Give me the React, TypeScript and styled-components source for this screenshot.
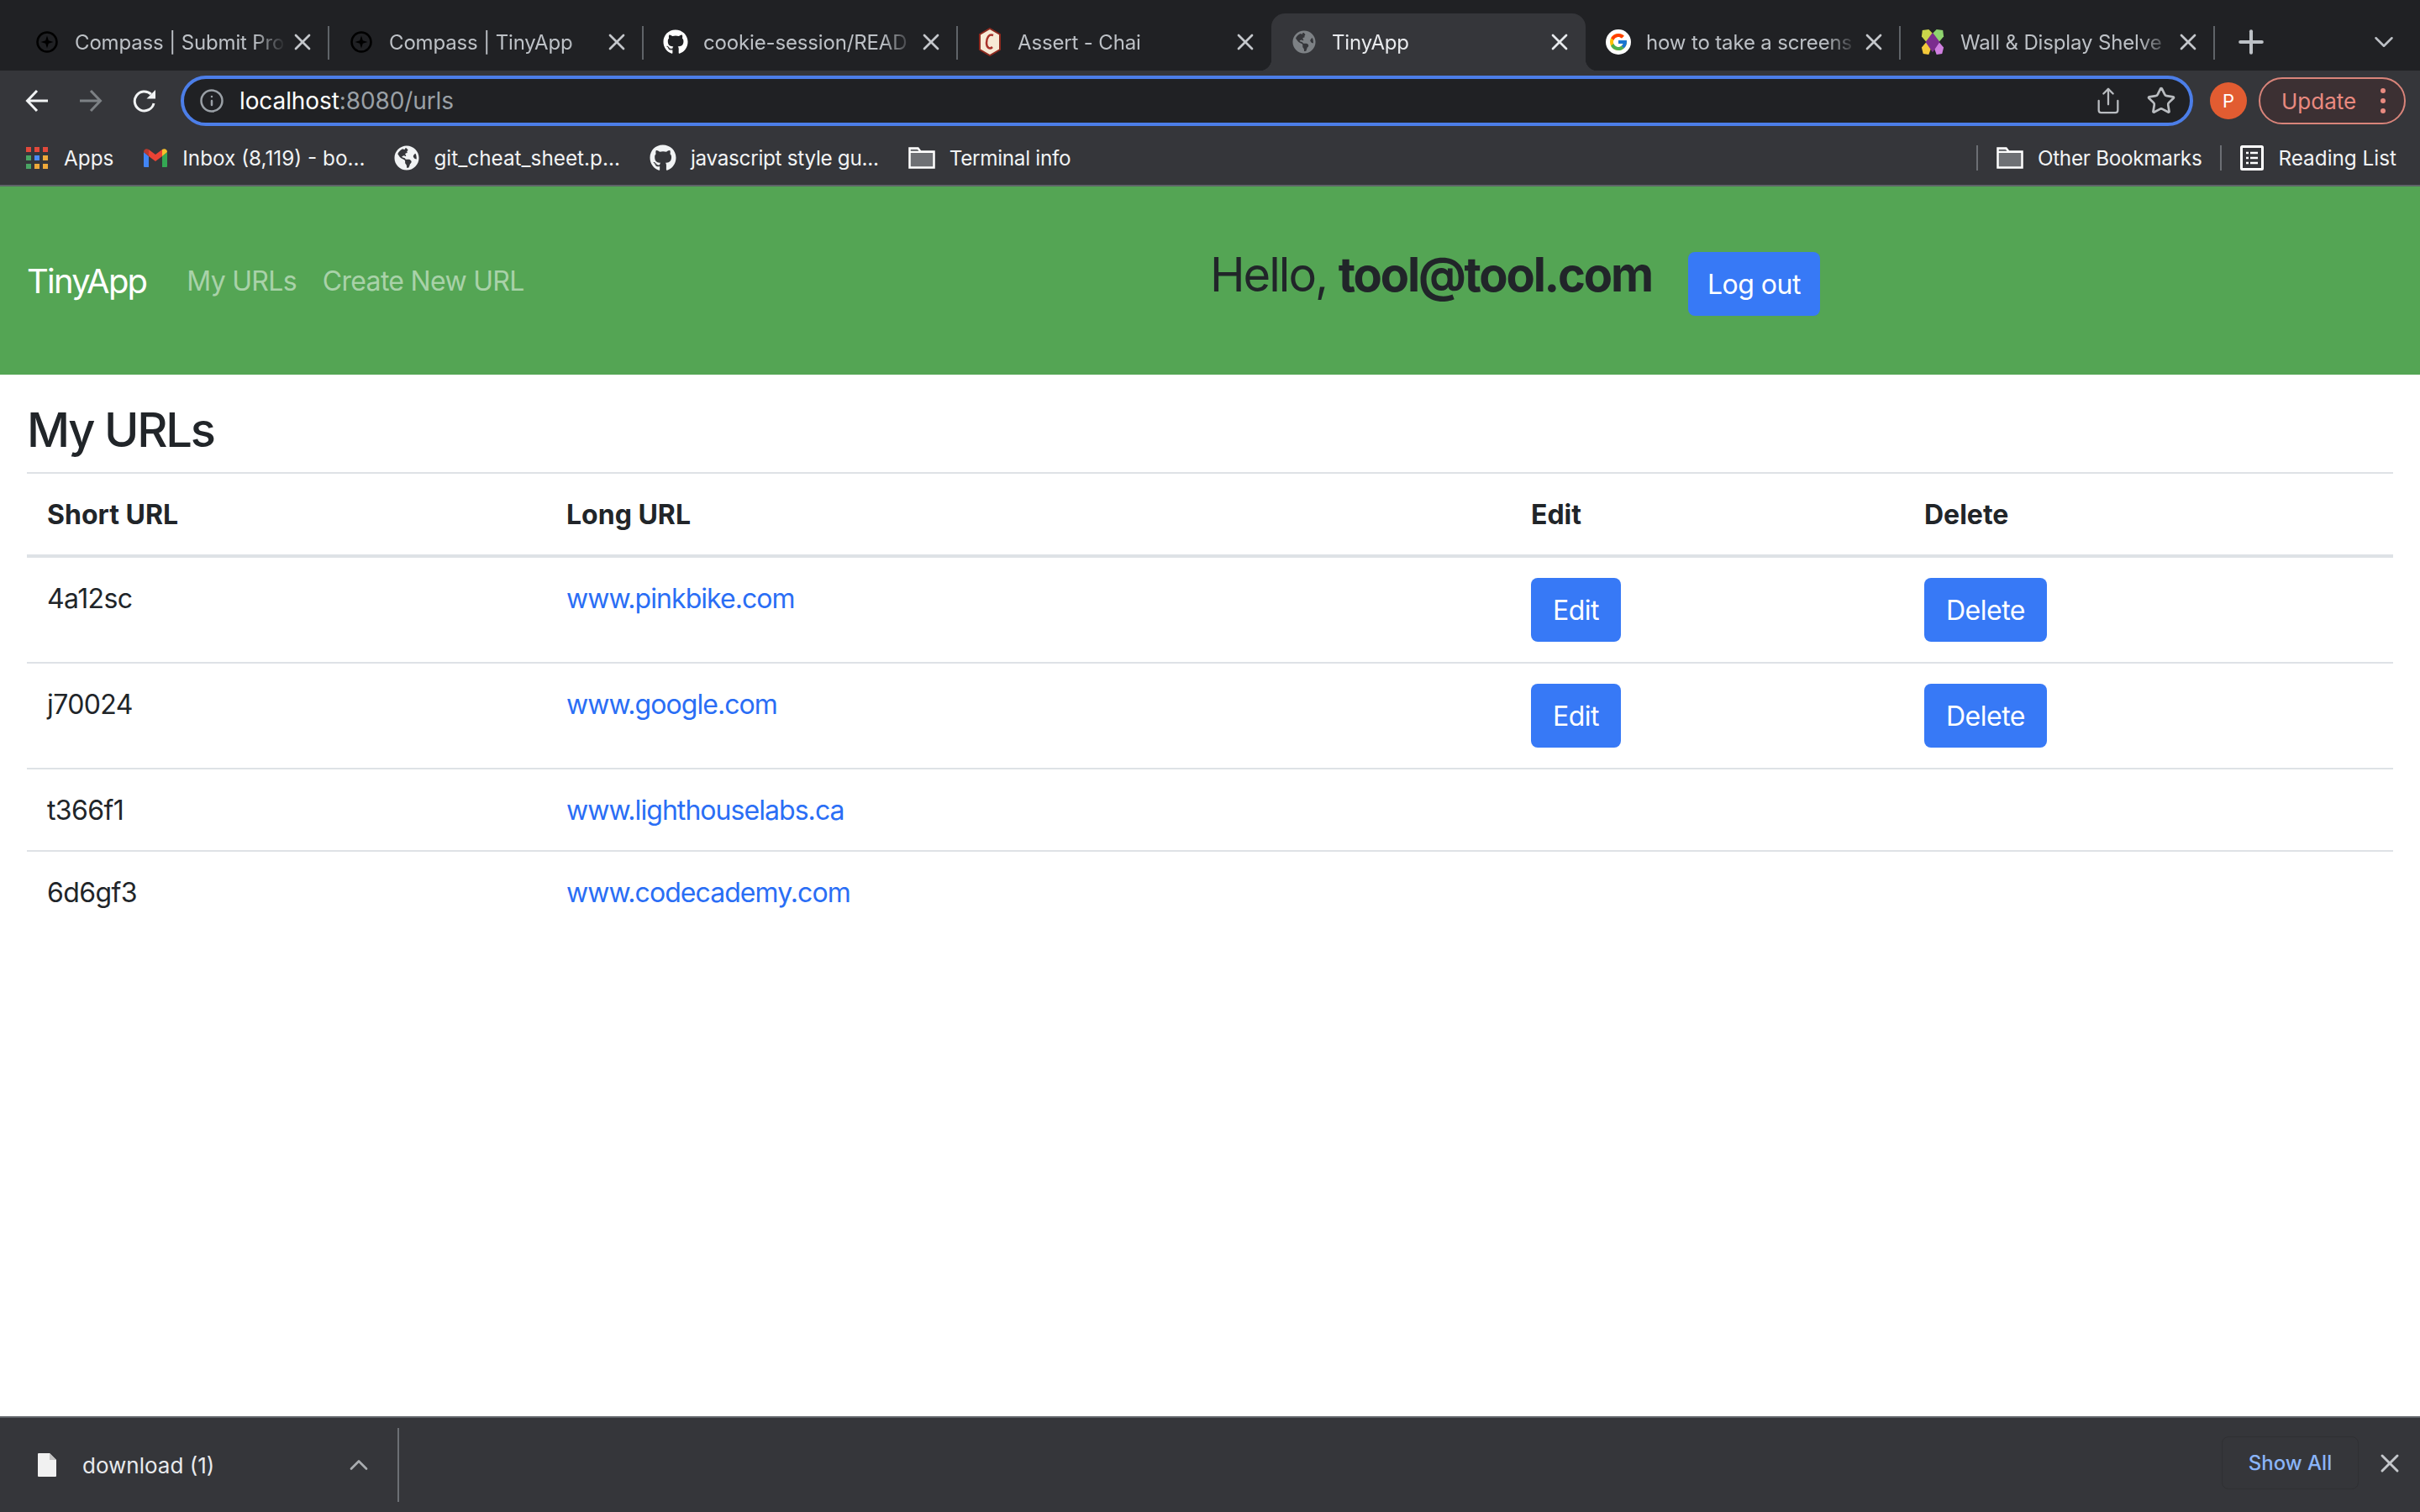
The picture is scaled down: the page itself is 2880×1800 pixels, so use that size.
import React from "react";
import styled, { createGlobalStyle } from "styled-components";
import { FaGithub, FaGlobeAmericas } from "react-icons/fa";
import { FcGoogle } from "react-icons/fc";
import { Info, Share, Star, X, Plus, ChevronDown, ChevronUp } from "lucide-react";

const GlobalStyle = createGlobalStyle`
  html, body {
    margin: 0;
    padding: 0;
    background: #fff;
  }
  body {
    font-family: Inter, "Liberation Sans", sans-serif;
    color: #212529;
  }
  * { box-sizing: border-box; }
`;

const Page = styled.div`
  width: 2880px;
  height: 1800px;
  display: flex;
  flex-direction: column;
  overflow: hidden;
`;

const TabStrip = styled.div`
  height: 84px;
  background: #202124;
  display: flex;
  align-items: flex-end;
  padding-left: 17px;
`;

const Tab = styled.div<{ $active?: boolean; $hideSep?: boolean }>`
  width: 374px;
  height: 68px;
  display: flex;
  align-items: center;
  padding-left: 24px;
  border-radius: 16px 16px 0 0;
  background: ${p => (p.$active ? "#35363a" : "transparent")};
  color: ${p => (p.$active ? "#e8eaed" : "#bdc1c6")};
  position: relative;
  &::after {
    content: "";
    display: ${p => (p.$hideSep ? "none" : "block")};
    position: absolute;
    right: -1px;
    top: 15px;
    width: 2px;
    height: 40px;
    background: #5f6368;
  }
`;

const TabFlare = styled.span<{ $side: "left" | "right" }>`
  position: absolute;
  bottom: 0;
  ${p => p.$side}: -14px;
  width: 14px;
  height: 14px;
  background: radial-gradient(
    circle at ${p => (p.$side === "left" ? "0 0" : "100% 0")},
    transparent 14px,
    #35363a 14.5px
  );
`;

const TabIcon = styled.span`
  width: 30px;
  height: 34px;
  flex: none;
  margin-right: 18px;
  display: flex;
  align-items: center;
  justify-content: center;
  color: #fff;
`;

const GoogleBadge = styled.span`
  width: 30px;
  height: 30px;
  border-radius: 50%;
  background: #fff;
  display: flex;
  align-items: center;
  justify-content: center;
`;

const TabTitle = styled.span`
  flex: 1;
  min-width: 0;
  font-size: 24px;
  letter-spacing: -0.15px;
  white-space: nowrap;
  overflow: hidden;
  -webkit-mask-image: linear-gradient(to right, #000 85%, transparent 100%);
  mask-image: linear-gradient(to right, #000 85%, transparent 100%);
`;

const TabClose = styled.span<{ $active?: boolean }>`
  width: 32px;
  flex: none;
  margin: 0 15px 0 4px;
  display: flex;
  color: ${p => (p.$active ? "#e8eaed" : "#c4c7cb")};
`;

const StripActions = styled.div`
  flex: 1;
  height: 68px;
  display: flex;
  align-items: center;
  padding: 0 24px 0 22px;
  justify-content: space-between;
  color: #bdc1c6;
`;

const Toolbar = styled.div`
  height: 66px;
  padding: 6px 0 0 30px;
  background: #35363a;
  display: flex;
  align-items: flex-start;
  color: #e8eaed;
`;

const NavIcons = styled.div`
  width: 185px;
  height: 60px;
  display: flex;
  align-items: center;
  gap: 36px;
  flex: none;
`;

const Omnibox = styled.div`
  width: 2395px;
  height: 60px;
  border: 4px solid #4c7ee8;
  border-radius: 30px;
  background: #202124;
  display: flex;
  align-items: center;
  padding: 0 16px 0 18px;
  flex: none;
`;

const UrlText = styled.span`
  margin-left: 18px;
  font-size: 28px;
  letter-spacing: -0.1px;
  color: #fff;
  flex: 1;
  em {
    font-style: normal;
    color: #9aa0a6;
  }
`;

const OmniActions = styled.div`
  display: flex;
  align-items: center;
  gap: 28px;
  color: #b9bcc0;
`;

const Avatar = styled.div`
  width: 44px;
  height: 44px;
  margin: 8px 0 0 20px;
  border-radius: 50%;
  background: #e25c31;
  color: #fff;
  font-size: 22px;
  display: flex;
  align-items: center;
  justify-content: center;
  flex: none;
`;

const UpdateButton = styled.div`
  width: 175px;
  height: 56px;
  margin: 2px 0 0 14px;
  border: 2px solid #d9847a;
  border-radius: 28px;
  background: #3c3033;
  color: #e98a80;
  font-size: 26px;
  display: flex;
  align-items: center;
  justify-content: space-between;
  padding: 0 22px 0 25px;
  flex: none;
`;

const Dots = styled.span`
  display: flex;
  flex-direction: column;
  gap: 6px;
  i {
    width: 6px;
    height: 6px;
    border-radius: 50%;
    background: #e98a80;
  }
`;

const BookmarkBar = styled.div`
  height: 72px;
  background: #35363a;
  border-bottom: 2px solid #5f6368;
  display: flex;
  align-items: center;
  padding: 6px 28px 0 31px;
  color: #f1f3f4;
  font-size: 24.3px;
`;

const Bookmark = styled.div<{ $gap?: number; $tight?: boolean }>`
  display: flex;
  align-items: center;
  gap: 17px;
  margin-right: ${p => p.$gap ?? 35}px;
  white-space: nowrap;
  letter-spacing: ${p => (p.$tight ? "-0.3px" : "normal")};
`;

const BarDivider = styled.span`
  width: 2px;
  height: 30px;
  background: #6c6f74;
  margin-right: 22px;
`;

const Spacer = styled.div`
  flex: 1;
`;

const NavBar = styled.nav`
  height: 224px;
  background: #54a554;
  display: grid;
  grid-template-columns: 1408px 1fr;
  padding-left: 32px;
  align-items: center;
`;

const NavLeft = styled.div`
  display: flex;
  align-items: center;
`;

const Brand = styled.a`
  font-size: 40px;
  letter-spacing: -1.8px;
  color: #fff;
  margin-right: 48px;
`;

const NavLink = styled.a`
  font-size: 32px;
  letter-spacing: -0.7px;
  color: rgba(255, 255, 255, 0.5);
  margin-right: 31px;
`;

const NavRight = styled.div`
  align-self: start;
  display: flex;
  align-items: flex-start;
  gap: 43px;
  padding-top: 71px;
`;

const Greeting = styled.h3`
  margin: 0;
  font-size: 56px;
  font-weight: 400;
  line-height: 68px;
  letter-spacing: -2px;
  b {
    font-weight: 700;
    letter-spacing: -2.2px;
  }
`;

const Button = styled.button`
  height: 76px;
  padding: 0 26px;
  font-family: inherit;
  font-size: 32px;
  letter-spacing: -0.5px;
  color: #fff;
  background: #3779f6;
  border: none;
  border-radius: 8px;
`;

const LogoutButton = styled(Button)`
  margin-top: 7px;
  padding: 0 23px;
`;

const Main = styled.main`
  flex: 1;
  padding: 32px 32px 0;
`;

const Heading = styled.h3`
  margin: 0 0 16px;
  font-size: 56px;
  font-weight: 500;
  line-height: 68px;
  letter-spacing: -2.2px;
`;

const Table = styled.table`
  width: 2816px;
  border-collapse: collapse;
  table-layout: fixed;
  font-size: 32px;
`;

const Th = styled.th<{ $w: number }>`
  width: ${p => p.$w}px;
  text-align: left;
  font-weight: 700;
  padding: 25px 24px 23px;
  line-height: 48px;
  border-top: 2px solid #dee2e6;
  border-bottom: 4px solid #dee2e6;
`;

const Td = styled.td`
  padding: 25px 24px 23px;
  line-height: 48px;
  letter-spacing: -0.6px;
  vertical-align: top;
`;

const ActionTd = styled.td`
  padding: 24px;
  line-height: 48px;
  vertical-align: top;
`;

const Row = styled.tr<{ $last?: boolean }>`
  border-bottom: ${p => (p.$last ? "none" : "2px solid #dee2e6")};
`;

const UrlLink = styled.a`
  color: #2a6ef5;
  letter-spacing: -0.95px;
`;

const DownloadBar = styled.div`
  height: 114px;
  background: #35363a;
  border-top: 2px solid #5f6368;
  display: flex;
  align-items: center;
  padding: 0 18px 0 45px;
  color: #e8eaed;
`;

const FileName = styled.span`
  font-size: 26px;
  margin-left: 31px;
  width: 311px;
`;

const VerticalRule = styled.span`
  width: 2px;
  height: 88px;
  margin-left: 28px;
  background: #6c6f74;
`;

const ShowAll = styled.div`
  width: 163px;
  height: 63px;
  border: 1px solid #2f3033;
  border-radius: 8px;
  color: #8ab4f8;
  font-size: 24px;
  font-weight: 500;
  display: flex;
  align-items: center;
  justify-content: center;
  margin: 0 19px 5px 0;
`;

const CloseBar = styled.span`
  display: flex;
  margin-bottom: 5px;
  color: #c4c7cb;
`;

const CompassIcon = () => (
  <svg width="28" height="28" viewBox="0 0 28 28" fill="none">
    <circle cx="14" cy="14" r="11.5" stroke="#000" strokeWidth="2.5" />
    <path d="M14 6.5l1.8 5.7 5.7 1.8-5.700 1.800-1.800 5.700-1.800-5.700-5.700-1.800 5.700-1.800z" fill="#000" />
  </svg>
);

const ChaiIcon = () => (
  <svg width="30" height="34" viewBox="0 0 30 34">
    <path d="M15 1l12 7v18l-12 7-12-7V8z" fill="#f7ead6" stroke="#8e2a1f" strokeWidth="2" />
    <path d="M19 9c-5-2-8 3-8 9s4 8 7 5" fill="none" stroke="#a8322a" strokeWidth="2.5" />
  </svg>
);

const WayfairIcon = () => (
  <svg width="32" height="34" viewBox="0 0 32 34">
    <path d="M3 2l8-1 5 5-8 11-6-7z" fill="#c9d54a" />
    <path d="M21 1l8 1 1 8-6 7-8-11z" fill="#8fd46f" />
    <path d="M8 17l6 8-3 8-7-1-2-8z" fill="#f3c83a" />
    <path d="M24 17l6 7-2 8-7 1-3-8z" fill="#cf7fe0" />
    <path d="M16 5l9 12-9 13-9-13z" fill="#7b2d8e" />
  </svg>
);

const AppsIcon = () => (
  <svg width="28" height="28" viewBox="0 0 28 28">
    {[0, 1, 2].map(r =>
      [0, 1, 2].map(c => (
        <rect
          key={`${r}${c}`}
          x={c * 10}
          y={r * 10 + 1}
          width="6"
          height="6"
          fill={[["#e2493b", "#e2493b", "#e2493b"], ["#4aa564", "#4c8bf5", "#efa93a"], ["#4aa564", "#efa93a", "#efa93a"]][r][c]}
        />
      ))
    )}
  </svg>
);

const GmailIcon = () => (
  <svg width="30" height="24" viewBox="0 0 30 24">
    <path d="M1 5v17a1 1 0 0 0 1 1h5V10z" fill="#4285f4" />
    <path d="M29 5v17a1 1 0 0 1-1 1h-5V10z" fill="#34a853" />
    <path d="M1 5c0-3 3-5 6-3v8z" fill="#b93a2f" />
    <path d="M7 10V2l8 6 8-6v8l-8 6z" fill="#ea4335" />
    <path d="M23 2c3-2 6 0 6 3l-6 5z" fill="#f6c02c" />
  </svg>
);

const FolderIcon = () => (
  <svg width="32" height="26" viewBox="0 0 32 26">
    <path d="M1.5 24.5V1.5h10l3 4h16v19z" fill="#6e7074" stroke="#fff" strokeWidth="2.5" />
    <path d="M1.5 6h29" stroke="#fff" strokeWidth="2" />
  </svg>
);

const ReadingListIcon = () => (
  <svg width="28" height="30" viewBox="0 0 28 30" fill="none" stroke="#fff">
    <rect x="1.5" y="1.5" width="25" height="27" rx="1" strokeWidth="3" />
    <path d="M7 9h3M7 15h3M7 21h3M12 9h9M12 15h9M12 21h9" strokeWidth="2.5" />
  </svg>
);

const FileIcon = () => (
  <svg width="22" height="28" viewBox="0 0 22 28">
    <path d="M1 0h13l8 8v19a1 1 0 0 1-1 1H1a1 1 0 0 1-1-1V1a1 1 0 0 1 1-1z" fill="#f1f1f1" />
    <path d="M14 0l8 8h-8z" fill="#c4c4c4" />
  </svg>
);

const BackIcon = () => (
  <svg width="28" height="28" viewBox="0 0 28 28" fill="none" stroke="#f1f3f4" strokeWidth="3">
    <path d="M27 14H3M14 2L2.5 14 14 26" />
  </svg>
);

const ForwardIcon = () => (
  <svg width="28" height="28" viewBox="0 0 28 28" fill="none" stroke="#7d8185" strokeWidth="3">
    <path d="M1 14h24M14 2l11.5 12L14 26" />
  </svg>
);

const ReloadIcon = () => (
  <svg width="28" height="28" viewBox="0 0 28 28" fill="none">
    <path d="M21.8 6.2A11.5 11.5 0 1 0 25 17" stroke="#f1f3f4" strokeWidth="3" />
    <path d="M27 1v10.5H16.5z" fill="#f1f3f4" />
  </svg>
);

const tabs = [
  { title: "Compass | Submit Pro", icon: <CompassIcon /> },
  { title: "Compass | TinyApp", icon: <CompassIcon /> },
  { title: "cookie-session/READ", icon: <FaGithub size={30} /> },
  { title: "Assert - Chai", icon: <ChaiIcon />, hideSep: true },
  { title: "TinyApp", icon: <FaGlobeAmericas size={28} color="#7d8185" />, active: true, hideSep: true },
  { title: "how to take a screens", icon: <GoogleBadge><FcGoogle size={24} /></GoogleBadge> },
  { title: "Wall & Display Shelve", icon: <WayfairIcon /> },
];

const urls = [
  { id: "4a12sc", long: "www.pinkbike.com", own: true },
  { id: "j70024", long: "www.google.com", own: true },
  { id: "t366f1", long: "www.lighthouselabs.ca" },
  { id: "6d6gf3", long: "www.codecademy.com" },
];

export default function App() {
  return (
    <Page>
      <GlobalStyle />
      <TabStrip>
        {tabs.map(t => (
          <Tab key={t.title} $active={t.active} $hideSep={t.hideSep}>
            {t.active && <TabFlare $side="left" />}
            <TabIcon>{t.icon}</TabIcon>
            <TabTitle>{t.title}</TabTitle>
            <TabClose $active={t.active}><X size={32} /></TabClose>
            {t.active && <TabFlare $side="right" />}
          </Tab>
        ))}
        <StripActions>
          <Plus size={44} strokeWidth={2.2} />
          <ChevronDown size={38} strokeWidth={1.6} />
        </StripActions>
      </TabStrip>
      <Toolbar>
        <NavIcons>
          <BackIcon />
          <ForwardIcon />
          <ReloadIcon />
        </NavIcons>
        <Omnibox>
          <Info size={30} color="#9aa0a6" />
          <UrlText>localhost<em>:8080/urls</em></UrlText>
          <OmniActions>
            <Share size={34} strokeWidth={1.6} />
            <Star size={36} strokeWidth={1.8} />
          </OmniActions>
        </Omnibox>
        <Avatar>P</Avatar>
        <UpdateButton>
          Update
          <Dots><i /><i /><i /></Dots>
        </UpdateButton>
      </Toolbar>
      <BookmarkBar>
        <Bookmark><AppsIcon />Apps</Bookmark>
        <Bookmark><GmailIcon />Inbox (8,119) - bo...</Bookmark>
        <Bookmark><FaGlobeAmericas size={30} />git_cheat_sheet.p...</Bookmark>
        <Bookmark $tight><FaGithub size={32} />javascript style gu...</Bookmark>
        <Bookmark $tight><FolderIcon />Terminal info</Bookmark>
        <Spacer />
        <BarDivider />
        <Bookmark $gap={22} $tight><FolderIcon />Other Bookmarks</Bookmark>
        <BarDivider />
        <Bookmark $gap={0}><ReadingListIcon />Reading List</Bookmark>
      </BookmarkBar>
      <NavBar>
        <NavLeft>
          <Brand>TinyApp</Brand>
          <NavLink>My URLs</NavLink>
          <NavLink>Create New URL</NavLink>
        </NavLeft>
        <NavRight>
          <Greeting>Hello, <b>tool@tool.com</b></Greeting>
          <LogoutButton>Log out</LogoutButton>
        </NavRight>
      </NavBar>
      <Main>
        <Heading>My URLs</Heading>
        <Table>
          <thead>
            <tr>
              <Th $w={618}>Short URL</Th>
              <Th $w={1148}>Long URL</Th>
              <Th $w={468}>Edit</Th>
              <Th $w={582}>Delete</Th>
            </tr>
          </thead>
          <tbody>
            {urls.map((u, i) => (
              <Row key={u.id} $last={i === urls.length - 1}>
                <Td>{u.id}</Td>
                <Td><UrlLink>{u.long}</UrlLink></Td>
                <ActionTd>{u.own && <Button>Edit</Button>}</ActionTd>
                <ActionTd>{u.own && <Button>Delete</Button>}</ActionTd>
              </Row>
            ))}
          </tbody>
        </Table>
      </Main>
      <DownloadBar>
        <FileIcon />
        <FileName>download (1)</FileName>
        <ChevronUp size={36} color="#a9acb0" strokeWidth={1.8} />
        <VerticalRule />
        <Spacer />
        <ShowAll>Show All</ShowAll>
        <CloseBar><X size={36} /></CloseBar>
      </DownloadBar>
    </Page>
  );
}
